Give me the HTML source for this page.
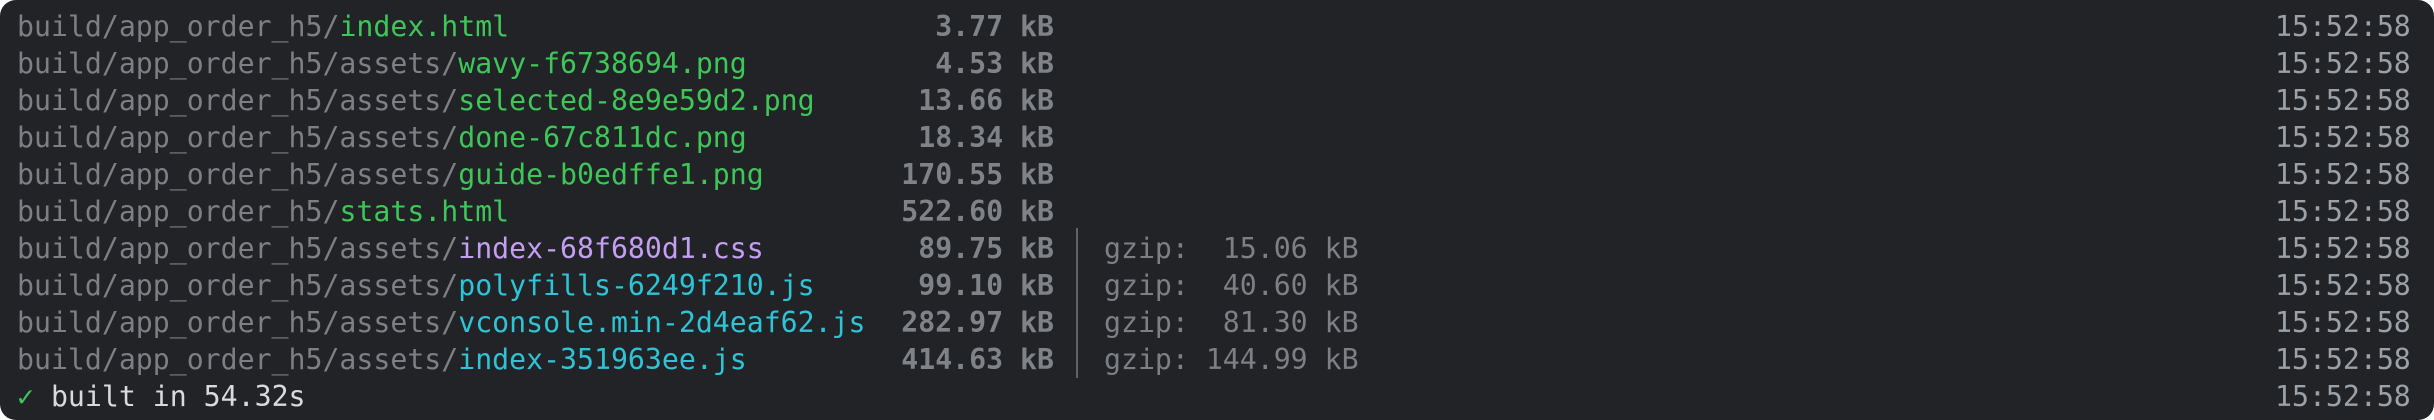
<!DOCTYPE html>
<html><head><style>
html,body{margin:0;padding:0;background:#fff;}
#t{position:relative;width:2434px;height:420px;background:#212327;border-radius:16px;overflow:hidden;font-family:"DejaVu Sans Mono","Liberation Mono",monospace;font-size:28.2px;}
.l{position:absolute;left:17px;height:37px;line-height:37px;white-space:pre;}
.p{color:#7c7f84}
.g{color:#3ec659}
.v{color:#c49ef2}
.c{color:#2fc3d6}
.s{position:absolute;right:1380px;height:37px;line-height:37px;white-space:pre;color:#7f8388;font-weight:bold}
.z{position:absolute;left:1104px;height:37px;line-height:37px;white-space:pre;color:#7c7f84}
.ts{position:absolute;left:2275px;height:37px;line-height:37px;color:#9ca1a7}
.bar{position:absolute;left:1076px;top:228px;width:2px;height:150px;background:#5f6266}
</style></head><body><div id="t">
<div class="l" style="top:8px"><span class="p">build/app_order_h5/</span><span class="g">index.html</span></div>
<div class="l" style="top:45px"><span class="p">build/app_order_h5/assets/</span><span class="g">wavy-f6738694.png</span></div>
<div class="l" style="top:82px"><span class="p">build/app_order_h5/assets/</span><span class="g">selected-8e9e59d2.png</span></div>
<div class="l" style="top:119px"><span class="p">build/app_order_h5/assets/</span><span class="g">done-67c811dc.png</span></div>
<div class="l" style="top:156px"><span class="p">build/app_order_h5/assets/</span><span class="g">guide-b0edffe1.png</span></div>
<div class="l" style="top:193px"><span class="p">build/app_order_h5/</span><span class="g">stats.html</span></div>
<div class="l" style="top:230px"><span class="p">build/app_order_h5/assets/</span><span class="v">index-68f680d1.css</span></div>
<div class="l" style="top:267px"><span class="p">build/app_order_h5/assets/</span><span class="c">polyfills-6249f210.js</span></div>
<div class="l" style="top:304px"><span class="p">build/app_order_h5/assets/</span><span class="c">vconsole.min-2d4eaf62.js</span></div>
<div class="l" style="top:341px"><span class="p">build/app_order_h5/assets/</span><span class="c">index-351963ee.js</span></div>
<div class="l" style="top:378px"><span style="color:#3ec659">✓</span><span style="color:#d8dadd"> built in 54.32s</span></div>

<div class="s" style="top:8px">3.77 kB</div>
<div class="s" style="top:45px">4.53 kB</div>
<div class="s" style="top:82px">13.66 kB</div>
<div class="s" style="top:119px">18.34 kB</div>
<div class="s" style="top:156px">170.55 kB</div>
<div class="s" style="top:193px">522.60 kB</div>
<div class="s" style="top:230px">89.75 kB</div>
<div class="s" style="top:267px">99.10 kB</div>
<div class="s" style="top:304px">282.97 kB</div>
<div class="s" style="top:341px">414.63 kB</div>
<div class="bar"></div>
<div class="z" style="top:230px">gzip:  15.06 kB</div>
<div class="z" style="top:267px">gzip:  40.60 kB</div>
<div class="z" style="top:304px">gzip:  81.30 kB</div>
<div class="z" style="top:341px">gzip: 144.99 kB</div>

<div class="ts" style="top:8px">15:52:58</div>
<div class="ts" style="top:45px">15:52:58</div>
<div class="ts" style="top:82px">15:52:58</div>
<div class="ts" style="top:119px">15:52:58</div>
<div class="ts" style="top:156px">15:52:58</div>
<div class="ts" style="top:193px">15:52:58</div>
<div class="ts" style="top:230px">15:52:58</div>
<div class="ts" style="top:267px">15:52:58</div>
<div class="ts" style="top:304px">15:52:58</div>
<div class="ts" style="top:341px">15:52:58</div>
<div class="ts" style="top:378px">15:52:58</div>
</div></body></html>
